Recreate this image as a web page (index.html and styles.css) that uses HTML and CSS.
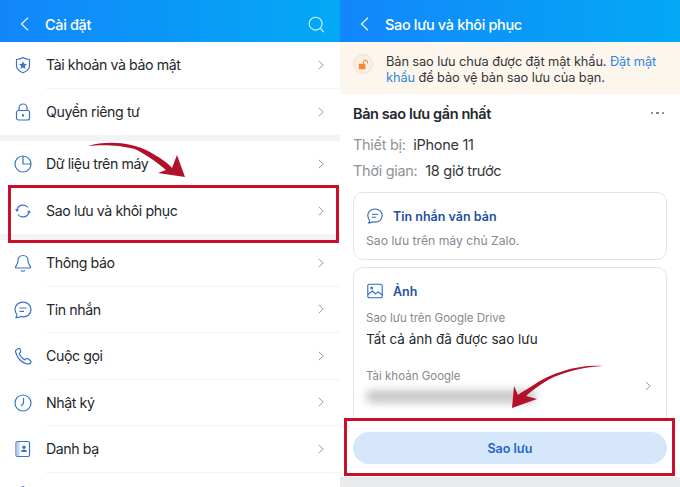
FILE: index.html
```html
<!DOCTYPE html>
<html lang="vi">
<head>
  <meta charset="UTF-8" />
  <meta name="viewport" content="width=device-width, initial-scale=1.0" />
  <title>Sao lưu và khôi phục</title>
  <link rel="stylesheet" href="styles.css">
</head>
<body>
  <div class="screen">
    <div class="top-bar">
      <svg class="back" viewBox="0 0 9 14"><path d="M8 .8 1.500 7 8 13.200"/></svg>
      <span class="top-title">Cài đặt</span>
      <svg class="search" viewBox="0 0 20 20"><circle cx="9" cy="9" r="7.600"/><path d="M14.500 14.700 18.500 19"/></svg>
    </div>

    <div class="menu-group">
      <div class="menu-row">
        <svg class="menu-icon" viewBox="0 0 20 20"><path d="M10 2.500c2 1.200 4 1.800 6.500 2v6c0 3.400-2.800 5.800-6.500 7.300-3.700-1.500-6.500-3.900-6.500-7.300v-6c2.500-.2 4.500-.8 6.500-2z"/><path class="solid" d="m10 6.300 1.200 2.500 2.700.4-2 1.900.5 2.700-2.400-1.300-2.400 1.300.5-2.700-2-1.900 2.700-.4z"/></svg>
        <div class="menu-main"><span>Tài khoản và bảo mật</span><svg class="chev" viewBox="0 0 6 10"><path d="m.8.800 4.400 4.200-4.400 4.200"/></svg></div>
      </div>
      <div class="menu-row">
        <svg class="menu-icon" viewBox="0 0 20 20"><rect x="3.500" y="8.500" width="13" height="9.500" rx="2"/><path d="M6 8.500V6a4 4 0 0 1 8 0v2.500"/><path class="solid" d="M9 12.200h2v2.300H9z"/></svg>
        <div class="menu-main"><span>Quyền riêng tư</span><svg class="chev" viewBox="0 0 6 10"><path d="m.8.800 4.400 4.200-4.400 4.200"/></svg></div>
      </div>
    </div>
    <div class="menu-group">
      <div class="menu-row">
        <svg class="menu-icon" viewBox="0 0 20 20"><circle cx="10" cy="10" r="8"/><path d="M10 2v8h8"/></svg>
        <div class="menu-main"><span>Dữ liệu trên máy</span><svg class="chev" viewBox="0 0 6 10"><path d="m.8.800 4.400 4.200-4.400 4.200"/></svg></div>
      </div>
      <div class="menu-row">
        <svg class="menu-icon" viewBox="0 0 20 20"><path d="M4 8.500A6.300 6.300 0 0 1 15 6.500"/><path d="M16 11.500A6.300 6.300 0 0 1 5 13.500"/><path class="solid" d="m2 8 4 .4-2 2.600zM18 12l-4-.4 2-2.600z"/></svg>
        <div class="menu-main"><span>Sao lưu và khôi phục</span><svg class="chev" viewBox="0 0 6 10"><path d="m.8.800 4.400 4.200-4.400 4.200"/></svg></div>
      </div>
    </div>
    <div class="menu-group">
      <div class="menu-row">
        <svg class="menu-icon" viewBox="0 0 20 20"><path d="M10 2.500c-3 0-5 2.200-5 5.200 0 3.500-2.200 5-2.500 6.300-.1.600.3 1 .9 1h13.200c.6 0 1-.4.900-1-.3-1.300-2.500-2.800-2.500-6.300 0-3-2-5.200-5-5.200z"/><path d="M8 17.500c1 .9 3 .9 4 0"/></svg>
        <div class="menu-main"><span>Thông báo</span><svg class="chev" viewBox="0 0 6 10"><path d="m.8.800 4.400 4.200-4.400 4.200"/></svg></div>
      </div>
      <div class="menu-row">
        <svg class="menu-icon" viewBox="0 0 20 20"><path d="M10 2.200c4.600 0 8 3 8 7.300s-3.400 7.300-8 7.300c-.9 0-1.800-.1-2.600-.4-1.300.9-2.600 1.300-4.400 1.300.7-1 1-2 .8-3.200C2.800 13 2 11.400 2 9.500c0-4.300 3.400-7.300 8-7.300z"/><path d="M6.500 8h7M6.500 11.300h4.500"/></svg>
        <div class="menu-main"><span>Tin nhắn</span><svg class="chev" viewBox="0 0 6 10"><path d="m.8.800 4.400 4.200-4.400 4.200"/></svg></div>
      </div>
      <div class="menu-row">
        <svg class="menu-icon" viewBox="0 0 20 20"><path d="M5.500 2.500 3.300 3.700c-.8.500-1 1.300-.7 2.300 1.500 5.500 5.500 10 10.500 11.700 1.700.5 3.300.4 4.300-.7.800-.9.700-1.800-.1-2.500l-2.300-1.700c-.7-.5-1.500-.4-2 .1l-1 1c-2.600-1.200-4.800-3.700-5.800-6.500l1-.9c.6-.6.700-1.300.3-2L6.900 2.900c-.4-.6-.9-.7-1.400-.4z"/></svg>
        <div class="menu-main"><span>Cuộc gọi</span><svg class="chev" viewBox="0 0 6 10"><path d="m.8.800 4.400 4.200-4.400 4.200"/></svg></div>
      </div>
      <div class="menu-row">
        <svg class="menu-icon" viewBox="0 0 20 20"><circle cx="10" cy="10" r="8"/><path d="M10.500 5v5.500L8 13"/></svg>
        <div class="menu-main"><span>Nhật ký</span><svg class="chev" viewBox="0 0 6 10"><path d="m.8.800 4.400 4.200-4.400 4.200"/></svg></div>
      </div>
      <div class="menu-row">
        <svg class="menu-icon" viewBox="0 0 20 20"><rect x="3" y="2.500" width="13.500" height="15" rx="1.500"/><path class="tint" d="M3.500 3h3v14h-3z"/><circle class="solid" cx="11" cy="8.300" r="1.700"/><path class="solid" d="M8 13c0-1.600 1.300-2.500 3-2.500s3 .9 3 2.500z"/></svg>
        <div class="menu-main"><span>Danh bạ</span><svg class="chev" viewBox="0 0 6 10"><path d="m.8.800 4.400 4.200-4.400 4.200"/></svg></div>
      </div>
      <div class="menu-row">
        <svg class="menu-icon" viewBox="0 0 20 20"><path d="M10 .5c-2 1.200-3 3-3 5"/><path d="M10 .5c2 1.200 3 3 3 5"/></svg>
        <div class="menu-main"><span></span></div>
      </div>
    </div>

    <div class="red-box red-box-left"></div>
    <svg class="swoosh" viewBox="0 0 340 487"><path d="M88 146C105 141 130 141 150 152 160 158 167 162 172 168L177 155 185 177 158 173 166 170C158 163 150 157 136 149.500 118 144.500 100 145 88 146Z"/></svg>
  </div>

  <div class="screen">
    <div class="top-bar">
      <svg class="back" viewBox="0 0 9 14"><path d="M8 .8 1.500 7 8 13.200"/></svg>
      <span class="top-title">Sao lưu và khôi phục</span>
    </div>

    <div class="notice">
      <div class="notice-badge">
        <svg viewBox="0 0 14 14"><rect x="1" y="6" width="8.500" height="7" rx="1"/><path d="M7 6V4a2.500 2.500 0 0 1 5 0v1.500"/></svg>
      </div>
      <p>Bản sao lưu chưa được đặt mật khẩu. <a href="#">Đặt mật</a> <a href="#">khẩu</a> để bảo vệ bản sao lưu của bạn.</p>
    </div>

    <div class="backup">
      <div class="backup-head">
        <strong>Bản sao lưu gần nhất</strong>
        <span class="dots"><i></i><i></i><i></i></span>
      </div>
      <div class="info-row"><span class="muted">Thiết bị:</span> iPhone 11</div>
      <div class="info-row"><span class="muted">Thời gian:</span> 18 giờ trước</div>

      <div class="card card-text">
        <div class="card-title">
          <svg class="card-icon" viewBox="0 0 20 20"><path d="M10 2.200c4.600 0 8 3 8 7.300s-3.400 7.300-8 7.300c-.9 0-1.800-.1-2.600-.4-1.300.9-2.600 1.300-4.400 1.300.7-1 1-2 .8-3.200C2.800 13 2 11.400 2 9.500c0-4.300 3.400-7.300 8-7.300z"/><path d="M6.500 8h7M6.500 11.300h4.500"/></svg>
          Tin nhắn văn bản
        </div>
        <div class="card-sub">Sao lưu trên máy chủ Zalo.</div>
      </div>

      <div class="card card-photo">
        <div class="card-title">
          <svg class="card-icon" viewBox="0 0 20 20"><rect x="2" y="2.500" width="16" height="15" rx="1.500"/><circle cx="6.300" cy="6.800" r="1"/><path d="M2 14l5-4 3.500 3 3-2 4.500 3.500"/></svg>
          Ảnh
        </div>
        <div class="card-sub">Sao lưu trên Google Drive</div>
        <div class="card-status">Tất cả ảnh đã được sao lưu</div>
        <div class="account">
          <div class="account-info">
            <div class="card-sub">Tài khoản Google</div>
            <div class="blurred"></div>
          </div>
          <svg class="chev" viewBox="0 0 6 10"><path d="m.8.800 4.400 4.200-4.400 4.200"/></svg>
        </div>
      </div>
    </div>

    <div class="action">
      <button class="backup-btn">Sao lưu</button>
    </div>
    <div class="bottom-strip"></div>

    <div class="red-box red-box-right"></div>
    <svg class="swoosh" viewBox="340 0 340 487"><path d="M603 366C580 364 552 372 532 386 526 390 521 392 518 395L514 386 512 408 537 399 526 396C532 390 540 385 548 380 565 371 585 367 603 366Z"/></svg>
  </div>
</body>
</html>
```

FILE: styles.css
```css
html, body {
  margin: 0;
  padding: 0;
  height: 100%;
  overflow: hidden;
  background-color: #fff;
  font-family: 'Inter', 'Liberation Sans', sans-serif;
}
body {
  display: flex;
}

.screen {
  position: relative;
  width: 340px;
  height: 487px;
  overflow: hidden;
  display: flex;
  flex-direction: column;
  flex-shrink: 0;
  background: #fff;
}

.top-bar {
  height: 42px;
  flex-shrink: 0;
  box-sizing: border-box;
  display: flex;
  align-items: center;
  padding: 6px 15px 0 20px;
  background: linear-gradient(90deg, #1286fb, #03a9f5);
  color: #fff;
}
.back {
  width: 9px;
  height: 14px;
  margin-right: 16px;
  fill: none;
  stroke: #e4f2ff;
  stroke-width: 1.300;
}
.top-title {
  font-size: 14.500px;
  font-weight: 500;
  letter-spacing: -0.35px;
}
.search {
  width: 17px;
  height: 17px;
  margin-left: auto;
  fill: none;
  stroke: #dff3ff;
  stroke-width: 1.300;
}

.menu-group {
  flex-shrink: 0;
}
.menu-group + .menu-group {
  border-top: 6px solid #f2f3f4;
}
.menu-row {
  height: 46.500px;
  display: flex;
  align-items: center;
}
.menu-icon {
  width: 20px;
  height: 20px;
  margin-left: 13px;
  margin-right: 13px;
  flex-shrink: 0;
  fill: none;
  stroke: #3a72c8;
  stroke-width: 1.200;
}
.menu-icon .solid {
  fill: #3a72c8;
  stroke: none;
}
.menu-icon .tint {
  fill: #b9d2f3;
  stroke: none;
}
.menu-main {
  flex: 1;
  height: 100%;
  display: flex;
  align-items: center;
  justify-content: space-between;
  padding-right: 16px;
  border-bottom: 1px solid #f2f3f4;
  box-sizing: border-box;
  font-size: 14.200px;
  letter-spacing: -0.42px;
  color: #24282c;
}
.menu-group .menu-row:last-child .menu-main {
  border-bottom: none;
}
.chev {
  width: 6px;
  height: 10px;
  flex-shrink: 0;
  fill: none;
  stroke: #989da2;
  stroke-width: 1;
}

.notice {
  height: 52px;
  flex-shrink: 0;
  box-sizing: border-box;
  display: flex;
  align-items: center;
  padding: 3px 14px 0 13px;
  background: #fdf6ec;
}
.notice-badge {
  width: 20px;
  height: 20px;
  margin-right: 13px;
  margin-bottom: 11px;
  flex-shrink: 0;
  box-sizing: border-box;
  display: flex;
  align-items: center;
  justify-content: center;
  border: 1px solid #f3e0cd;
  border-radius: 50%;
  background: #fbeee2;
}
.notice-badge svg {
  width: 11px;
  height: 11px;
  fill: none;
}
.notice-badge rect {
  fill: #ee8a3c;
}
.notice-badge path {
  stroke: #ee8a3c;
  stroke-width: 1.300;
}
.notice p {
  margin: 0;
  font-size: 12.800px;
  line-height: 15.500px;
  letter-spacing: -0.09px;
  color: #33373b;
}
.notice a {
  color: #2f87e0;
  text-decoration: none;
}

.backup {
  flex: 1;
  padding: 0 13px;
}
.backup-head {
  height: 38px;
  display: flex;
  align-items: center;
  justify-content: space-between;
  padding-right: 1px;
  font-size: 14.500px;
  letter-spacing: -0.4px;
  color: #24282c;
}
.backup-head strong {
  font-weight: 600;
}
.dots {
  display: flex;
  gap: 3px;
  margin-right: 2px;
}
.dots i {
  width: 2.500px;
  height: 2.500px;
  border-radius: 50%;
  background: #6b7075;
}
.info-row {
  height: 26px;
  line-height: 26px;
  font-size: 14.500px;
  letter-spacing: -0.3px;
  color: #33373b;
}
.muted {
  color: #8f9499;
  margin-right: 4px;
}

.card {
  box-sizing: border-box;
  border: 1px solid #e2e4e6;
  border-radius: 10px;
  padding: 14px 12px 0;
}
.card-text {
  height: 68px;
  margin-top: 8px;
}
.card-text .card-sub {
  font-size: 12.200px;
  margin-top: 8px;
}
.card-photo {
  height: 160px;
  margin-top: 7px;
}
.card-title {
  display: flex;
  align-items: center;
  gap: 9px;
  height: 18px;
  font-size: 12.500px;
  font-weight: 600;
  color: #1f4fa3;
}
.card-icon {
  width: 18px;
  height: 18px;
  fill: none;
  stroke: #2f66bd;
  stroke-width: 1.200;
}
.card-sub {
  margin-top: 11px;
  font-size: 11.500px;
  color: #85898e;
}
.card-status {
  margin-top: 6px;
  font-size: 13.500px;
  color: #24282c;
}
.account {
  display: flex;
  align-items: center;
  justify-content: space-between;
  margin-top: 22px;
  padding-right: 3px;
}
.account .card-sub {
  margin-top: 0;
}
.blurred {
  width: 170px;
  height: 13px;
  margin-top: 7px;
  border-radius: 6px;
  background: #c6c6c6;
  filter: blur(4px);
}

.action {
  position: absolute;
  left: 0;
  right: 0;
  top: 421px;
  height: 55px;
  background: #fff;
  padding: 11px 13px 0;
  box-sizing: border-box;
}
.backup-btn {
  display: block;
  width: 100%;
  height: 32px;
  border: none;
  border-radius: 16px;
  background: #d6e7fb;
  color: #1f66c9;
  font-family: inherit;
  font-size: 12.500px;
  font-weight: 600;
}
.bottom-strip {
  position: absolute;
  left: 0;
  right: 0;
  bottom: 0;
  height: 10px;
  background: #e9eaeb;
}

/* red marks drawn over the screenshot */
.red-box {
  position: absolute;
  box-sizing: border-box;
  border: 3px solid #c8102e;
}
.red-box-left {
  left: 8px;
  top: 185px;
  width: 331px;
  height: 58px;
}
.red-box-right {
  left: 4px;
  top: 418px;
  width: 331px;
  height: 58px;
}
.swoosh {
  position: absolute;
  left: 0;
  top: 0;
  width: 340px;
  height: 487px;
  fill: #b3102a;
}
```
